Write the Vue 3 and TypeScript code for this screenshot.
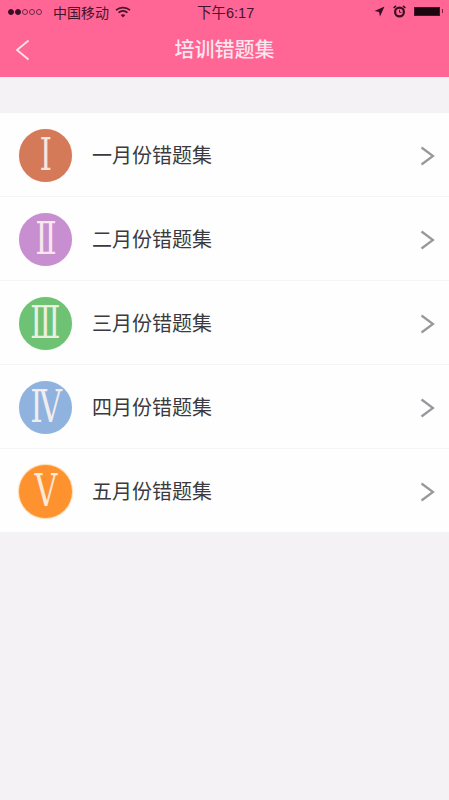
<script setup lang="ts">
interface Row { id: number; numeral: string; label: string; tone: string }
const rows: Row[] = [
  { id: 1, numeral: 'Ⅰ', label: '一月份错题集', tone: 'one' },
  { id: 2, numeral: 'Ⅱ', label: '二月份错题集', tone: 'two' },
  { id: 3, numeral: 'Ⅲ', label: '三月份错题集', tone: 'three' },
  { id: 4, numeral: 'Ⅳ', label: '四月份错题集', tone: 'four' },
  { id: 5, numeral: 'Ⅴ', label: '五月份错题集', tone: 'five' },
]
</script>

<template>
  <div class="page">
    <header class="header">
      <div class="status">
        <div class="status-left">
          <span class="signal">
            <i class="dot on"></i><i class="dot on"></i><i class="dot"></i><i class="dot"></i><i class="dot"></i>
          </span>
          <span class="carrier">中国移动</span>
          <svg class="wifi" width="16" height="12" viewBox="0 0 16 12">
            <path d="M1 4.2C5 .8 11 .8 15 4.2" fill="none" stroke="#45142c" stroke-width="1.7" />
            <path d="M3.5 6.7C6.2 4.5 9.8 4.5 12.5 6.7" fill="none" stroke="#45142c" stroke-width="1.7" />
            <path d="M8 11.5 5.7 8.9C7 7.9 9 7.9 10.3 8.9Z" fill="#45142c" />
          </svg>
        </div>
        <span class="clock">下午6:17</span>
        <div class="status-right">
          <svg width="11" height="11" viewBox="0 0 11 11"><path d="M10.5.5 .5 5 5 6 6 10.5Z" fill="#3a0f25" /></svg>
          <svg width="13" height="13" viewBox="0 0 13 13">
            <circle cx="6.5" cy="7" r="4.4" fill="none" stroke="#3a0f25" stroke-width="2.2" />
            <path d="M6.5 4.8V7.3H8.4" fill="none" stroke="#3a0f25" stroke-width="1" />
            <path d="M.6 3 3 .8M12.4 3 10 .8" stroke="#3a0f25" stroke-width="1.6" />
          </svg>
          <span class="battery"><span class="battery-fill"></span></span>
        </div>
      </div>
      <div class="nav">
        <svg class="back" width="15" height="22" viewBox="0 0 15 22">
          <path d="M13.5 1.5 2 11l11.5 9.5" fill="none" stroke="#fbe6ee" stroke-width="1.8" />
        </svg>
        <h1 class="title">培训错题集</h1>
      </div>
    </header>

    <ul class="list">
      <li v-for="row in rows" :key="row.id" class="row">
        <span class="badge" :class="row.tone"><span class="numeral">{{ row.numeral }}</span></span>
        <span class="label">{{ row.label }}</span>
        <svg class="chevron" width="15" height="20" viewBox="0 0 15 20">
          <path d="M1.5 1.5 13 10 1.5 18.5" fill="none" stroke="#98989c" stroke-width="2.2" />
        </svg>
      </li>
    </ul>
  </div>
</template>

<style>
html, body { margin: 0; background: #f4f2f5; }
</style>

<style scoped>
.page {
  width: 449px;
  min-height: 800px;
  background: #f4f2f5;
  font-family: "Liberation Sans", "Noto Sans CJK SC", sans-serif;
}
.header { height: 77px; background: #ff6595; display: flex; flex-direction: column; }
.status {
  height: 23px;
  padding: 0 7px 0 8px;
  display: flex;
  align-items: center;
  justify-content: space-between;
  color: #45142c;
  font-size: 13px;
  position: relative;
}
.status-left { display: flex; align-items: center; gap: 6px; }
.signal { display: flex; gap: 1px; margin-right: 5px; }
.dot { width: 6px; height: 6px; border-radius: 50%; border: 1px solid #6d2a48; box-sizing: border-box; }
.dot.on { background: #3a0f25; border-color: #3a0f25; }
.carrier { font-size: 14px; }
.wifi { margin-left: 0; }
.clock { position: absolute; left: 197px; font-size: 14.5px; }
.status-right { display: flex; align-items: center; gap: 8px; }
.battery { width: 26px; height: 9px; background: #45142c; box-sizing: border-box; padding: 1px; display: block; margin-right: 2px; position: relative; }
.battery::after { content: ""; position: absolute; right: -3px; top: 2px; width: 1px; height: 4px; background: #6d2a48; }
.battery-fill { display: block; height: 100%; background: #1c0610; }
.nav { flex: 1; display: flex; align-items: center; justify-content: center; position: relative; }
.back { position: absolute; left: 15px; top: 16px; }
.title { margin: 0; font-size: 20px; line-height: 26px; font-weight: 500; color: #fbe6ee; letter-spacing: 0; }
.list { list-style: none; margin: 36px 0 0; padding: 0; background: #fff; }
.row {
  height: 84px;
  box-sizing: border-box;
  border-bottom: 1px solid #f4f3f7;
  padding: 2px 14px 0 19px;
  display: flex;
  align-items: center;
  background: #fefefe;
}
.badge {
  width: 53px;
  height: 53px;
  border-radius: 50%;
  display: flex;
  align-items: center;
  justify-content: center;
  color: rgba(255, 245, 240, 0.88);
  font-family: "Liberation Serif", "DejaVu Serif", serif;
  font-size: 44px;
  line-height: 1;
  flex: none;
}
.numeral { display: block; transform: scaleX(0.72); font-weight: 400; }
.one { background: #d57a58; box-shadow: 0 0 1px 0 #f6c8b4; }
.two { background: #c78ed0; box-shadow: 0 0 1px 0 #ecd2f0; }
.three { background: #6dc274; box-shadow: 0 0 1px 0 #c9ecc9; }
.four { background: #8fb3de; box-shadow: 0 0 1px 0 #d5e3f4; }
.five { background: #fd922f; box-shadow: 0 0 1px 1px #fdd9ae; }
.label { margin-left: 20px; padding-bottom: 2px; font-size: 20px; color: #3a3a3f; flex: 1; }
.chevron { flex: none; }
</style>
